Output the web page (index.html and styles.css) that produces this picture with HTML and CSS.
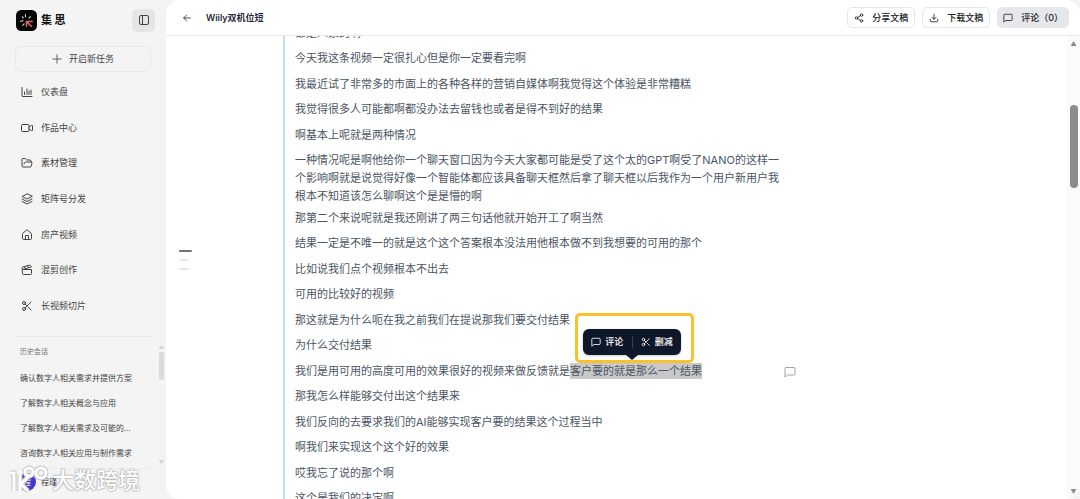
FILE: index.html
```html
<!DOCTYPE html>
<html lang="zh-CN">
<head>
    <meta charset="utf-8">
    <meta name="viewport" content="width=device-width, initial-scale=1">
    <title>Wiily双机位短</title>
    <link rel="stylesheet" href="styles.css">
</head>
<body>
    <!-- 图标 -->
    <svg class="sprite" aria-hidden="true">
        <symbol id="i_panel" viewBox="0 0 24 24"><rect x="3" y="3" width="18" height="18" rx="3"/><path d="M9 3v18"/></symbol>
        <symbol id="i_plus" viewBox="0 0 24 24"><path d="M2 12h20M12 2v20"/></symbol>
        <symbol id="i_chart" viewBox="0 0 24 24"><path d="M2 3v17a1 1 0 0 0 1 1h19M7 17v-5M12 17V6M16 17v-7M20 17V8"/></symbol>
        <symbol id="i_video" viewBox="0 0 24 24"><rect x="1" y="5" width="15" height="14" rx="2"/><path d="M16 10l5-3a1 1 0 0 1 2 1v8a1 1 0 0 1-2 1l-5-3"/></symbol>
        <symbol id="i_folder" viewBox="0 0 24 24"><path d="M6 14l1.5-2.9A2 2 0 0 1 9.2 10H20a2 2 0 0 1 1.9 2.5l-1.5 6A2 2 0 0 1 18.500 20H4a2 2 0 0 1-2-2V5a2 2 0 0 1 2-2h3.900a2 2 0 0 1 1.700.9l.8 1.200a2 2 0 0 0 1.700.9H18a2 2 0 0 1 2 2v2"/></symbol>
        <symbol id="i_layers" viewBox="0 0 24 24"><path d="M12 2L2 7l10 5 10-5zM2 12l10 5 10-5M2 17l10 5 10-5"/></symbol>
        <symbol id="i_home" viewBox="0 0 24 24"><path d="M15 21v-8H9v8M3 10a2 2 0 0 1 .7-1.500l7-6a2 2 0 0 1 2.600 0l7 6A2 2 0 0 1 21 10v9a2 2 0 0 1-2 2H5a2 2 0 0 1-2-2z"/></symbol>
        <symbol id="i_clap" viewBox="0 0 24 24"><path d="M20.200 6L3 11l-.9-2.400a2 2 0 0 1 1.300-2.400l13.500-4a2 2 0 0 1 2.500 1.300zM6.200 5.300l3.100 3.900M12.400 3.400l3.100 4M3 11h18v8a2 2 0 0 1-2 2H5a2 2 0 0 1-2-2z"/></symbol>
        <symbol id="i_cut" viewBox="0 0 24 24"><circle cx="6" cy="6" r="3"/><circle cx="6" cy="18" r="3"/><path d="M20 4L8.100 15.900M14.800 14.800L20 20M8.100 8.100L12 12"/></symbol>
        <symbol id="i_back" viewBox="0 0 24 24"><path d="M20 12H4M11 5l-7 7 7 7"/></symbol>
        <symbol id="i_share" viewBox="0 0 24 24"><circle cx="18" cy="5" r="3"/><circle cx="6" cy="12" r="3"/><circle cx="18" cy="19" r="3"/><path d="M8.600 13.500l6.800 4M15.400 6.500l-6.800 4"/></symbol>
        <symbol id="i_down" viewBox="0 0 24 24"><path d="M3 15v4a2 2 0 0 0 2 2h14a2 2 0 0 0 2-2v-4M7 10l5 5 5-5M12 15V3"/></symbol>
        <symbol id="i_chat" viewBox="0 0 24 24"><path d="M22 16a2 2 0 0 1-2 2H7l-5 4V5a2 2 0 0 1 2-2h16a2 2 0 0 1 2 2z"/></symbol>
    </svg>

    <aside class="sidebar">
        <div class="side_head">
            <svg class="logo" viewBox="0 0 20 20" aria-hidden="true">
                <rect width="20" height="20" rx="5" fill="#050505"/>
                <path d="M9 4v3M6 6l1 2M4 11l3-1M6 15l2-2M14 6l-2 2" stroke="#ddd" fill="none"/>
                <path d="M10 16v-5h6M10 11l5 5" stroke="#e0686b" stroke-width="1.500" fill="none"/>
            </svg>
            <span class="brand">集 思</span>
            <button class="panel_btn" aria-label="收起侧栏"><svg class="icon"><use href="#i_panel"/></svg></button>
        </div>
        <button class="new_btn"><svg class="icon small"><use href="#i_plus"/></svg>开启新任务</button>
        <nav class="menu">
            <a href="#"><svg class="icon"><use href="#i_chart"/></svg>仪表盘</a>
            <a href="#"><svg class="icon"><use href="#i_video"/></svg>作品中心</a>
            <a href="#"><svg class="icon"><use href="#i_folder"/></svg>素材管理</a>
            <a href="#"><svg class="icon"><use href="#i_layers"/></svg>矩阵号分发</a>
            <a href="#"><svg class="icon"><use href="#i_home"/></svg>房产视频</a>
            <a href="#"><svg class="icon"><use href="#i_clap"/></svg>混剪创作</a>
            <a href="#"><svg class="icon"><use href="#i_cut"/></svg>长视频切片</a>
        </nav>
        <div class="history">
            <div class="history_list">
                <h2>历史会话</h2>
                <a href="#">确认数字人相关需求并提供方案</a>
                <a href="#">了解数字人相关概念与应用</a>
                <a href="#">了解数字人相关需求及可能的...</a>
                <a href="#">咨询数字人相关应用与制作需求</a>
            </div>
            <div class="side_scroll">
                <span class="arrow up"></span>
                <span class="side_thumb"></span>
                <span class="arrow down"></span>
            </div>
        </div>
        <div class="user">
            <span class="avatar">程</span>
            <span>程瑾</span>
        </div>
        <div class="watermark">
            <svg viewBox="0 0 42 28" aria-hidden="true">
                <g class="wm_edge"><path d="M2 7h4v18M12 8v17M20 11l-7 7 7 7"/><circle cx="21" cy="6" r="4"/><circle cx="33" cy="7" r="5"/></g>
                <g class="wm_fill"><path d="M2 7h4v18M12 8v17M20 11l-7 7 7 7"/><circle cx="21" cy="6" r="4"/><circle cx="33" cy="7" r="5"/></g>
            </svg>
            <span>大数跨境</span>
        </div>
    </aside>

    <main class="main">
        <header class="top">
            <button class="back_btn" aria-label="返回"><svg class="icon small"><use href="#i_back"/></svg></button>
            <h1>Wiily双机位短</h1>
            <div class="actions">
                <button><svg class="icon small"><use href="#i_share"/></svg>分享文稿</button>
                <button><svg class="icon small"><use href="#i_down"/></svg>下载文稿</button>
                <button class="on"><svg class="icon small"><use href="#i_chat"/></svg>评论（0）</button>
            </div>
        </header>
        <div class="content">
            <div class="outline"><i class="current"></i><i></i><i></i></div>
            <div class="script">
                <p>都是人家的啊</p>
                <p>今天我这条视频一定很扎心但是你一定要看完啊</p>
                <p>我最近试了非常多的市面上的各种各样的营销自媒体啊我觉得这个体验是非常糟糕</p>
                <p>我觉得很多人可能都啊都没办法去留钱也或者是得不到好的结果</p>
                <p>啊基本上呢就是两种情况</p>
                <p class="long">一种情况呢是啊他给你一个聊天窗口因为今天大家都可能是受了这个太的GPT啊受了NANO的这样一个影响啊就是说觉得好像一个智能体都应该具备聊天框然后拿了聊天框以后我作为一个用户新用户我根本不知道该怎么聊啊这个是是懵的啊</p>
                <p>那第二个来说呢就是我还刚讲了两三句话他就开始开工了啊当然</p>
                <p>结果一定是不唯一的就是这个这个答案根本没法用他根本做不到我想要的可用的那个</p>
                <p>比如说我们点个视频根本不出去</p>
                <p>可用的比较好的视频</p>
                <p>那这就是为什么呃在我之前我们在提说那我们要交付结果</p>
                <p>为什么交付结果</p>
                <p class="selected">我们是用可用的高度可用的效果很好的视频来做反馈就是<mark>客户要的就是那么一个结果<span class="popup_frame"><span class="popup"><button><svg class="icon small"><use href="#i_chat"/></svg>评论</button><button><svg class="icon small"><use href="#i_cut"/></svg>删减</button></span></span></mark><button class="note_btn" aria-label="添加评论"><svg class="icon"><use href="#i_chat"/></svg></button></p>
                <p>那我怎么样能够交付出这个结果来</p>
                <p>我们反向的去要求我们的AI能够实现客户要的结果这个过程当中</p>
                <p>啊我们来实现这个这个好的效果</p>
                <p>哎我忘了说的那个啊</p>
                <p>这个是我们的决定啊</p>
            </div>
            <div class="scrollbar">
                <span class="arrow up"></span>
                <span class="thumb"></span>
                <span class="arrow down"></span>
            </div>
        </div>
    </main>
</body>
</html>
```

FILE: styles.css
```css
*{
    box-sizing: border-box;
    margin: 0;
    padding: 0;
}
body{
    display: flex;
    height: 100vh;
    overflow: hidden;
    background-color: #f4f4f4;
    color: #444;
    font-family: Inter, "Noto Sans CJK SC", sans-serif;
    font-size: 9px;
    line-height: 18px;
}
button{
    border: 0;
    background: none;
    color: inherit;
    font: inherit;
    cursor: pointer;
}
a{
    color: inherit;
    text-decoration: none;
}
.sprite{
    position: absolute;
    width: 0;
    height: 0;
}
.icon{
    flex: none;
    width: 12px;
    height: 12px;
    fill: none;
    stroke: currentColor;
    stroke-width: 2;
    stroke-linecap: round;
    stroke-linejoin: round;
}
.icon.small{
    width: 10px;
    height: 10px;
}

/* 侧栏 */
.sidebar{
    position: relative;
    display: flex;
    flex-direction: column;
    flex: none;
    width: 166px;
    padding: 8px 0 4px 15px;
}
.side_head{
    display: flex;
    align-items: center;
    height: 24px;
    margin-right: 11px;
}
.logo{
    width: 21px;
    height: 21px;
    margin-left: 1px;
}
.brand{
    margin-left: 4px;
    color: #111;
    font-size: 11px;
    font-weight: 700;
}
.panel_btn{
    display: flex;
    align-items: center;
    justify-content: center;
    width: 23px;
    height: 23px;
    margin-left: auto;
    border-radius: 5px;
    background-color: #e5e5e5;
}
.new_btn{
    display: flex;
    align-items: center;
    justify-content: center;
    gap: 7px;
    height: 26px;
    margin: 14px 15px 0 0;
    border: 1px solid #e8e8e8;
    border-radius: 7px;
}
.menu{
    display: flex;
    flex-direction: column;
    flex: none;
    height: 250px;
    margin-top: 2px;
}
.menu a{
    display: flex;
    flex: 1;
    align-items: center;
    gap: 8px;
    padding-left: 6px;
}
.history{
    display: flex;
    flex: 1;
    margin-top: 12px;
}
.history_list{
    flex: 1;
    border-top: 1px solid #e8e8e8;
    padding: 6px 0 0 5px;
    font-size: 8px;
    white-space: nowrap;
}
.history_list h2{
    margin-bottom: 5px;
    color: #777;
    font-size: 7px;
    font-weight: 400;
}
.history_list a{
    display: block;
    line-height: 25px;
}
.side_scroll{
    display: flex;
    flex-direction: column;
    align-items: center;
    width: 9px;
    margin: 9px 0 3px 6px;
}
.arrow{
    width: 6px;
    height: 5px;
    background-color: #8b8b8b;
}
.arrow.up{
    clip-path: polygon(50% 0, 100% 100%, 0 100%);
}
.arrow.down{
    margin-top: auto;
    clip-path: polygon(0 0, 100% 0, 50% 100%);
}
.side_scroll .arrow{
    height: 4px;
    background-color: #d4d4d4;
}
.side_thumb{
    width: 5px;
    height: 28px;
    margin-top: 3px;
    border-radius: 3px;
    background-color: #dadada;
}
.user{
    display: flex;
    align-items: center;
    gap: 5px;
    height: 27px;
    margin: 1px 15px 0 0;
    border-top: 1px solid #ebebeb;
    padding-left: 3px;
    font-size: 8px;
}
.avatar{
    width: 18px;
    height: 18px;
    border-radius: 50%;
    background-color: #4338ca;
    color: #fff;
    text-align: center;
}
.watermark{
    position: absolute;
    left: 8px;
    bottom: 4px;
    display: flex;
    align-items: center;
    gap: 2px;
    color: #fff;
    font-size: 22px;
    font-weight: 500;
    line-height: 30px;
    text-shadow: 0 0 2px #aaa, 0 0 2px #aaa, 0 0 1px #aaa;
}
.watermark svg{
    width: 42px;
    height: 28px;
    fill: none;
    overflow: visible;
}
.wm_edge{
    stroke: #c4c4c4;
    stroke-width: 5;
}
.wm_fill{
    stroke: #fff;
    stroke-width: 3;
}

/* 主区域 */
.main{
    display: flex;
    flex: 1;
    flex-direction: column;
    min-width: 0;
    overflow: hidden;
    border-radius: 14px;
    background-color: #fff;
}
.top{
    display: flex;
    flex: none;
    align-items: center;
    height: 36px;
    border-bottom: 1px solid #e8eaed;
    padding: 0 11px 0 16px;
    color: #1f2937;
}
.back_btn{
    display: flex;
}
.top h1{
    margin-left: 14px;
    font-size: 9px;
    font-weight: 600;
}
.actions{
    display: flex;
    gap: 7px;
    margin-left: auto;
}
.actions button{
    display: flex;
    align-items: center;
    gap: 8px;
    height: 21px;
    border: 1px solid #e5e7eb;
    border-radius: 5px;
    padding: 0 6px;
    color: #222;
    font-weight: 500;
}
.actions .on{
    padding: 0 5px;
    background-color: #e5e7eb;
}
.content{
    display: flex;
    flex: 1;
    min-height: 0;
    overflow: hidden;
}
.outline{
    display: flex;
    flex: none;
    flex-direction: column;
    align-self: center;
    gap: 7px;
    width: 117px;
    padding: 0 0 16px 13px;
}
.outline i{
    width: 10px;
    height: 2px;
    border-radius: 1px;
    background-color: #e5e7eb;
}
.outline .current{
    width: 13px;
    background-color: #6b7280;
}
.script{
    flex: none;
    width: 514px;
    margin-top: -16px;
    border-left: 2px solid #c4daf5;
    padding-left: 10px;
    color: #4b5563;
    font-size: 11px;
}
.script p{
    position: relative;
    min-height: 25px;
    padding: 4px 14px 3px 0;
}
.script p:nth-child(even){
    min-height: 26px;
}
.script .long{
    padding-bottom: 0;
}
.script mark{
    position: relative;
    padding: 1px 0;
    background-color: #c8c8c8;
    color: inherit;
}

/* 选中文字的浮动菜单 */
.popup_frame{
    position: absolute;
    left: 5px;
    bottom: 16px;
    width: 119px;
    border: 3px solid #fbc02d;
    border-radius: 5px;
    padding: 13px 10px 5px 5px;
}
.popup{
    position: relative;
    display: flex;
    align-items: center;
    height: 26px;
    border-radius: 6px;
    background-color: #0f172a;
    color: #fff;
    font-size: 9px;
    font-weight: 500;
    box-shadow: 0 1px 3px rgba(0, 0, 0, 0.2);
}
.popup::after{
    content: "";
    position: absolute;
    left: 50%;
    top: 100%;
    width: 12px;
    height: 5px;
    margin-left: -6px;
    background-color: #0f172a;
    clip-path: polygon(0 0, 100% 0, 50% 100%);
}
.popup button{
    display: flex;
    flex: 1;
    align-items: center;
    justify-content: center;
    gap: 4px;
    white-space: nowrap;
}
.popup button + button{
    border-left: 1px solid #334155;
    line-height: 12px;
}
.note_btn{
    position: absolute;
    right: 1px;
    top: 8px;
    display: flex;
    color: #9ca3af;
}
.scrollbar{
    display: flex;
    flex-direction: column;
    align-items: center;
    width: 13px;
    margin-left: auto;
    padding: 5px 0;
    background-color: #fbfbfb;
}
.thumb{
    width: 8px;
    height: 83px;
    margin-top: 59px;
    border-radius: 4px;
    background-color: #8b8b8b;
}
```
